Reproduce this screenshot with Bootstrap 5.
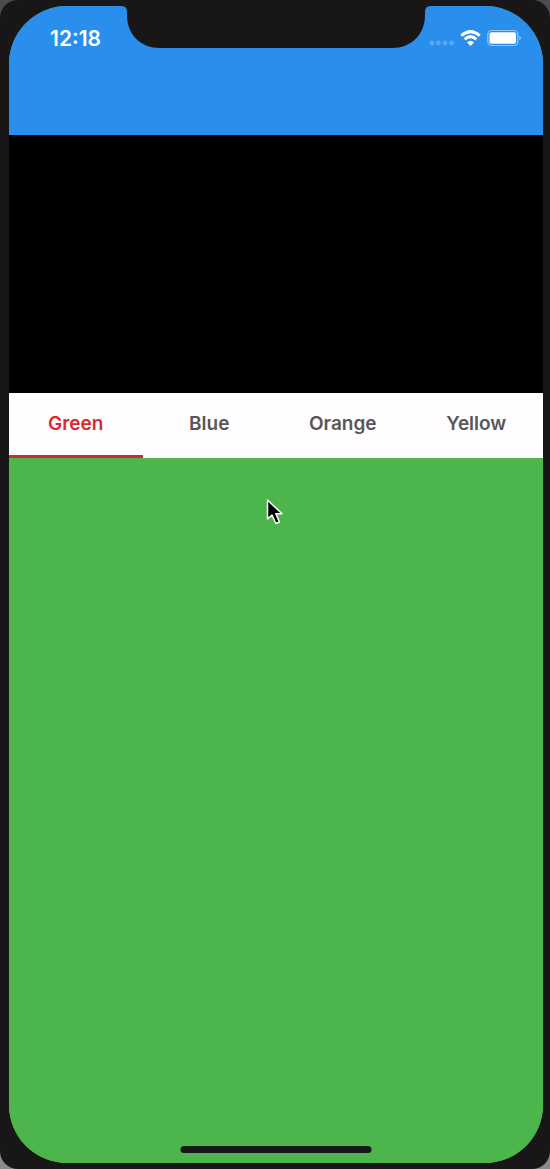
<!DOCTYPE html>
<html lang="en">
<head>
<meta charset="utf-8">
<meta name="viewport" content="width=device-width, initial-scale=1">
<title>Colour tabs</title>
<link href="https://cdn.jsdelivr.net/npm/bootstrap@5.3.0/dist/css/bootstrap.min.css" rel="stylesheet">
<style>
  body { background: linear-gradient(#4c4b50 50%, #8a898c 50%); font-family: Inter, "Liberation Sans", sans-serif; }
  .device { background: #181617; padding: 6px 7px 6px 9px; border-radius: 18px; }
  .screen { border-radius: 58px; background: #4cb64c; }
  .app-header { background: #298eec; height: 129px; padding: 20px 22px 0 41px; color: #fff; }
  .notch { width: 310px; height: 43px; }
  .clock { font-size: 21px; line-height: 26px; font-weight: 600; }
  .status-icons { gap: 6px; height: 24px; }
  .banner { background: #000; height: 258px; }
  .tab-strip { background: #fffdff; }
  .tab-strip .nav-link { height: 65px; padding: 0; background: transparent; border: 0; border-bottom: 3px solid transparent; border-radius: 0; color: #58565a; font-size: 19px; line-height: 24px; font-weight: 600; }
  .tab-strip .nav-link.active { color: #d92a33; border-color: #cc2b33; }
  .pane-green { background: #4cb64c; }
  .pane-blue { background: #298eec; }
  .pane-orange { background: #f59b23; }
  .pane-yellow { background: #fbe74b; }
  .home-bar { width: 191px; height: 7px; bottom: 10px; background: #181617; }
  .pointer { left: 257px; top: 40px; }
</style>
</head>
<body>
<div class="device min-vh-100 d-flex">
  <div class="screen flex-fill d-flex flex-column overflow-hidden position-relative">
    <header class="app-header d-flex justify-content-between align-items-start">
      <span class="clock">12:18</span>
      <svg class="notch position-absolute top-0 start-50 translate-middle-x" viewBox="0 0 310 43" aria-hidden="true">
        <path fill="#181617" d="M0 0C4 0 6 2 6 6V9C6 29 20 42 39 42H271C290 42 304 29 304 9V6C304 2 306 0 310 0Z"/>
      </svg>
      <div class="status-icons d-flex align-items-center">
        <svg width="25" height="24" viewBox="0 0 25 24" fill="#fff" fill-opacity=".22" aria-hidden="true">
          <circle cx="3" cy="17" r="2.5"/><circle cx="9.5" cy="17" r="2.5"/><circle cx="16" cy="17" r="2.5"/><circle cx="22.5" cy="17" r="2.5"/>
        </svg>
        <svg width="21" height="24" viewBox="0 0 21 24" fill="none" stroke="#fff" stroke-width="3" aria-label="Wi-Fi" role="img">
          <path d="M1.3 9.7Q10.5 1.5 19.7 9.7"/>
          <path d="M4.7 13.3Q10.5 8 16.3 13.3"/>
          <path fill="#fff" stroke="none" d="M7 16.4Q10.5 13.2 14 16.4L10.5 20Z"/>
        </svg>
        <svg width="34" height="24" viewBox="0 0 34 24" aria-label="Battery full" role="img">
          <rect x=".8" y="4.5" width="30" height="15" rx="4" fill="none" stroke="#fff" stroke-opacity=".5" stroke-width="1.2"/>
          <rect x="2.5" y="6.3" width="26.5" height="11.5" rx="2" fill="#fff"/>
          <path fill="#fff" fill-opacity=".5" d="M32.3 9.7Q34 10.5 34 12T32.3 14.3Z"/>
        </svg>
      </div>
    </header>
    <div class="banner"></div>
    <div class="tab-strip nav nav-justified" role="tablist">
      <button class="nav-link nav-item active" id="tab-green" data-bs-toggle="tab" data-bs-target="#green" type="button" role="tab" aria-controls="green" aria-selected="true">Green</button>
      <button class="nav-link nav-item" id="tab-blue" data-bs-toggle="tab" data-bs-target="#blue" type="button" role="tab" aria-controls="blue" aria-selected="false">Blue</button>
      <button class="nav-link nav-item" id="tab-orange" data-bs-toggle="tab" data-bs-target="#orange" type="button" role="tab" aria-controls="orange" aria-selected="false">Orange</button>
      <button class="nav-link nav-item" id="tab-yellow" data-bs-toggle="tab" data-bs-target="#yellow" type="button" role="tab" aria-controls="yellow" aria-selected="false">Yellow</button>
    </div>
    <main class="tab-content flex-fill d-flex position-relative">
      <div class="tab-pane flex-fill pane-green show active" id="green" role="tabpanel" aria-labelledby="tab-green"></div>
      <div class="tab-pane flex-fill pane-blue" id="blue" role="tabpanel" aria-labelledby="tab-blue"></div>
      <div class="tab-pane flex-fill pane-orange" id="orange" role="tabpanel" aria-labelledby="tab-orange"></div>
      <div class="tab-pane flex-fill pane-yellow" id="yellow" role="tabpanel" aria-labelledby="tab-yellow"></div>
      <svg class="pointer position-absolute" width="19" height="28" viewBox="0 0 19 28" aria-hidden="true">
        <path fill="#000" stroke="#fff" stroke-width="1.5" stroke-linejoin="round" d="M1.5 2V21L6 17L9.8 25.5L13.5 24L9.8 15.8H16Z"/>
      </svg>
    </main>
    <div class="home-bar rounded-pill position-absolute start-50 translate-middle-x"></div>
  </div>
</div>
<script src="https://cdn.jsdelivr.net/npm/bootstrap@5.3.0/dist/js/bootstrap.bundle.min.js"></script>
</body>
</html>
